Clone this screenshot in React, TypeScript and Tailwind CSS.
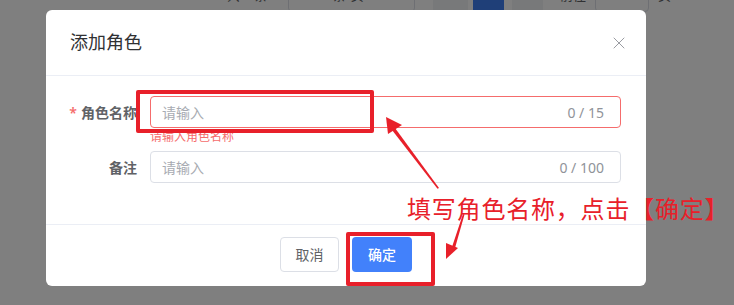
import { X } from 'lucide-react'

const font = { fontFamily: '"Noto Sans", "Noto Sans CJK SC", sans-serif' }

function Pagination() {
  return (
    <div className="flex h-[32px] items-center -mt-[20px] pl-[227px] text-[13px] text-[#606266]">
      <span className="w-[61px]">共 0 条</span>
      <div className="flex h-[32px] w-[127px] items-center rounded border border-[#dcdfe6] pl-[29px]">20条/页</div>
      <div className="ml-[18px] flex h-[32px] w-[35px] items-center justify-center bg-[#f0f2f5]">&lt;</div>
      <div className="ml-[5px] flex h-[32px] w-[31px] items-center justify-center bg-[#3f7ff0] text-white">1</div>
      <div className="ml-[8px] flex h-[32px] w-[31px] items-center justify-center bg-[#f0f2f5]">&gt;</div>
      <span className="ml-[17px]">前往</span>
      <div className="ml-[9px] flex h-[32px] w-[54px] items-center justify-center rounded border border-[#dcdfe6]">1</div>
      <span className="ml-[9px]">页</span>
    </div>
  )
}

function Field({ label, required, limit, error }: { label: string; required?: boolean; limit: number; error?: string }) {
  return (
    <div className="flex">
      <label className="flex h-[32px] w-[84px] items-center justify-end pr-[13px] text-[14px] font-semibold text-[#606266]">
        {required && <span className="mr-[4px] text-[#f56c6c]">*</span>}
        {label}
      </label>
      <div className="relative flex-1">
        <div
          className={`flex h-[32px] items-center justify-between rounded-[4px] border bg-white pl-[11px] pr-[16px] text-[14px] ${
            error ? 'border-[#f56c6c]' : 'border-[#dcdfe6]'
          }`}
        >
          <span className="text-[#a8abb2]">请输入</span>
          <span className="text-[#909399]">0 / {limit}</span>
        </div>
        {error && <div className="absolute left-0 top-[34px] text-[12px] leading-[14px] text-[#f56c6c]">{error}</div>}
      </div>
    </div>
  )
}

export default function App() {
  return (
    <div className="relative h-[305px] w-[734px] overflow-hidden bg-white" style={font}>
      <Pagination />
      <div className="absolute inset-0 bg-black/50" />

      <div className="absolute left-[46px] top-[10px] flex h-[276px] w-[600px] flex-col rounded-[6px] bg-white">
        <div className="flex h-[66px] items-center justify-between border-b border-[#ebeef5] pl-[24px] pr-[17px]">
          <span className="text-[18px] text-[#303133]">添加角色</span>
          <X size={20} strokeWidth={1.1} className="text-[#909399]" />
        </div>
        <div className="flex h-[149px] flex-col gap-[23px] border-b border-[#ebeef5] pl-[20px] pr-[25px] pt-[20px]">
          <Field label="角色名称" required limit={15} error="请输入角色名称" />
          <Field label="备注" limit={100} />
        </div>
        <div className="flex flex-1 items-center justify-center gap-[13px] pb-[2px]">
          <button className="h-[35px] w-[59px] rounded-[4px] border border-[#dcdfe6] text-[14px] text-[#606266]">取消</button>
          <button className="h-[35px] w-[60px] rounded-[4px] bg-[#4281fb] text-[14px] font-medium text-white">确定</button>
        </div>
      </div>

      {/* annotations */}
      <div className="absolute left-[136px] top-[90px] h-[43px] w-[238px] rounded-[2px] border-[4px] border-[#e8202a]" />
      <div className="absolute left-[346px] top-[232px] h-[54px] w-[89px] rounded-[2px] border-[4px] border-[#e8202a]" />
      <div className="absolute left-[407px] top-[193px] whitespace-nowrap text-[24px] leading-[32px] tracking-[0.8px] text-[#e8202a]">
        填写角色名称，点击【确定】
      </div>
      <svg className="absolute inset-0" width="734" height="305" viewBox="0 0 734 305">
        <polygon points="439,188 437.5,188.8 392,130 395,128" fill="#e8202a" />
        <polygon points="386,117 402,125 388,134" fill="#e8202a" />
        <polygon points="463,214 464.5,214.5 455,248 452,247" fill="#e8202a" />
        <polygon points="446,259 446,243 458,248" fill="#e8202a" />
      </svg>
    </div>
  )
}
